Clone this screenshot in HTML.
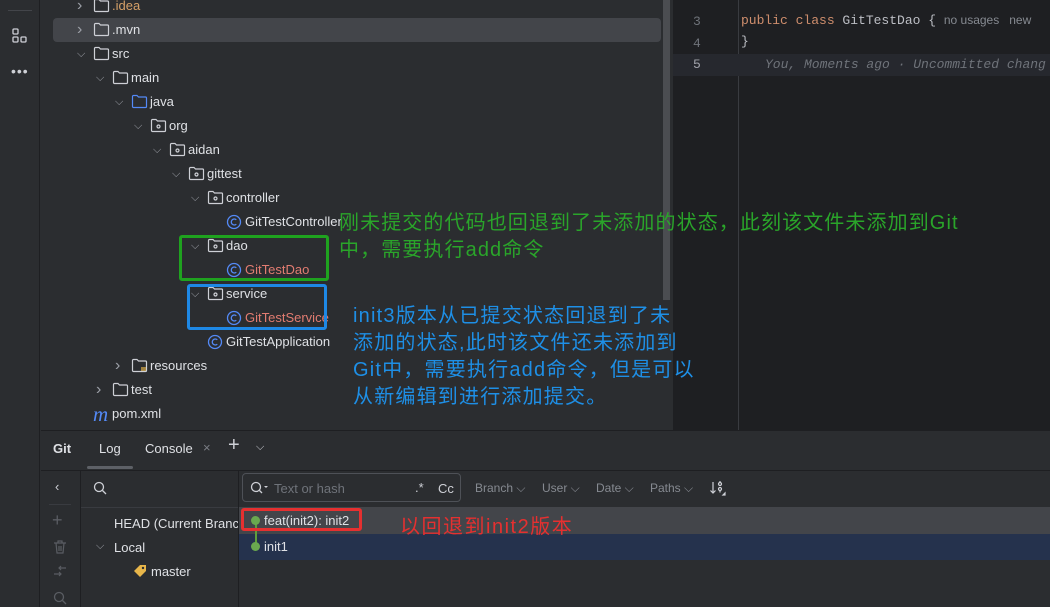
<!DOCTYPE html>
<html><head><meta charset="utf-8"><style>
*{margin:0;padding:0;box-sizing:border-box}
body{width:1050px;height:607px;overflow:hidden;background:#2b2d30;font-family:"Liberation Sans","Noto Sans CJK SC",sans-serif;font-size:13px;color:#dfe1e5;position:relative}
.a{position:absolute}
.row{position:absolute;height:24px;line-height:24px;white-space:nowrap}
.arr{position:absolute;top:0;color:#9da0a8;font-size:11px}
.ic{position:absolute;top:4px;display:block;line-height:0}
.t{position:absolute;top:0}
.cj{font-family:"Liberation Sans","Noto Sans CJK SC",sans-serif}
.mono{font-family:"Liberation Mono",monospace}
.fl{position:absolute;top:481px;color:#868a91;font-size:12px;white-space:nowrap}
</style></head><body>
<div class="a" style="left:0;top:0;width:40px;height:607px;background:#2b2d30;border-right:1px solid #1e1f22"></div>
<div class="a" style="left:8px;top:10px;width:24px;height:1px;background:#43454a"></div>
<svg class="a" style="left:11px;top:27px" width="18" height="18" viewBox="0 0 18 18" fill="none" stroke="#ced0d6" stroke-width="1.3"><rect x="2" y="2" width="5" height="5" rx="1"/><rect x="2" y="10" width="5" height="5" rx="1"/><rect x="10" y="10" width="5" height="5" rx="1"/></svg>
<div class="a" style="left:11px;top:66px;color:#ced0d6;font-size:14px;letter-spacing:1px;line-height:10px">•••</div>
<div class="a" style="left:41px;top:0;width:624px;height:430px;background:#2b2d30"></div>
<div class="a" style="left:53px;top:18px;width:608px;height:24px;background:#43454a;border-radius:4px"></div>
<div class="a" style="left:663px;top:0;width:7px;height:300px;background:#4b4d51"></div>
<div id="tree"></div>
<div class="a" style="left:673px;top:0;width:377px;height:430px;background:#1e1f22"></div>
<div class="a" style="left:738px;top:0;width:1px;height:430px;background:#393b40"></div>
<div class="a" style="left:673px;top:54px;width:377px;height:22px;background:#26282e"></div>
<div class="a mono" style="left:693px;top:13px;color:#6f737a;font-size:13px;line-height:18px">3<br><span style="position:relative;top:4px">4</span></div>
<div class="a mono" style="left:693px;top:57px;color:#a1a3ab;font-size:13px">5</div>
<div class="a mono" style="left:741px;top:13px;font-size:13px;color:#bcbec4"><span style="color:#cf8e6d">public class</span> GitTestDao {  <span style="font-family:'Liberation Sans';font-size:12px;color:#868a91">no usages &nbsp; new</span></div>
<div class="a mono" style="left:741px;top:34px;font-size:13px;color:#bcbec4">}</div>
<div class="a mono" style="left:765px;top:57px;font-size:13px;color:#6f737a;font-style:italic;white-space:nowrap">You, Moments ago · Uncommitted chang</div>
<div class="a" style="left:179px;top:235px;width:150px;height:46px;border:3px solid #1fa21f;border-radius:3px"></div>
<div class="a" style="left:187px;top:284px;width:140px;height:46px;border:3px solid #1e88e5;border-radius:3px"></div>
<div class="a cj" style="left:339px;top:210px;color:#2aa52a;font-size:20px;line-height:27px;white-space:nowrap;letter-spacing:1.1px">刚未提交的代码也回退到了未添加的状态，此刻该文件未添加到Git<br>中，需要执行add命令</div>
<div class="a cj" style="left:353px;top:303px;color:#1e8fe6;font-size:20px;line-height:27px;white-space:nowrap;letter-spacing:1.2px">init3版本从已提交状态回退到了未<br>添加的状态,此时该文件还未添加到<br>Git中，需要执行add命令，但是可以<br>从新编辑到进行添加提交。</div>
<div class="a" style="left:41px;top:430px;width:1009px;height:177px;background:#2b2d30;border-top:1px solid #1e1f22"></div>
<div class="a" style="left:53px;top:441px;font-weight:bold">Git</div>
<div class="a" style="left:99px;top:441px">Log</div>
<div class="a" style="left:87px;top:466px;width:46px;height:3px;background:#5d6066;border-radius:2px"></div>
<div class="a" style="left:145px;top:441px">Console</div>
<div class="a" style="left:203px;top:440px;color:#7b7e85">×</div>
<div class="a" style="left:228px;top:434px;font-size:20px;color:#ced0d6">+</div>
<div class="a" style="left:256px;top:441px;color:#ced0d6;font-size:11px">⌵</div>
<div class="a" style="left:41px;top:470px;width:1009px;height:1px;background:#1e1f22"></div>
<div class="a" style="left:80px;top:471px;width:1px;height:136px;background:#1e1f22"></div>
<div class="a" style="left:238px;top:471px;width:1px;height:136px;background:#1e1f22"></div>
<div class="a" style="left:55px;top:479px;color:#ced0d6">‹</div>
<div class="a" style="left:49px;top:504px;width:22px;height:1px;background:#393b40"></div>
<div class="a" style="left:52px;top:510px;color:#5a5d63;font-size:18px">+</div>
<svg class="a" style="left:52px;top:539px" width="16" height="16" viewBox="0 0 16 16" fill="none" stroke="#5a5d63" stroke-width="1.2"><path d="M2 4h12M6 4V2h4v2M4 4l1 10h6l1-10M7 7v5M9 7v5"/></svg>
<svg class="a" style="left:52px;top:563px" width="16" height="16" viewBox="0 0 16 16" fill="none" stroke="#5a5d63" stroke-width="1.2"><path d="M2 11h7M7 9l2 2-2 2M14 5H7M9 3 7 5l2 2"/></svg>
<svg class="a" style="left:52px;top:590px" width="16" height="16" viewBox="0 0 16 16" fill="none" stroke="#5a5d63" stroke-width="1.3"><circle cx="7" cy="7" r="4.5"/><path d="M10.5 10.5 14 14"/></svg>
<svg class="a" style="left:92px;top:480px" width="16" height="16" viewBox="0 0 16 16" fill="none" stroke="#ced0d6" stroke-width="1.3"><circle cx="7" cy="7" r="4.5"/><path d="M10.5 10.5 14 14"/></svg>
<div class="a" style="left:81px;top:507px;width:157px;height:1px;background:#393b40"></div>
<div class="a" style="left:114px;top:516px;white-space:nowrap;width:124px;overflow:hidden">HEAD (Current Branch)</div>
<div class="a" style="left:96px;top:540px;color:#9da0a8;font-size:11px">⌵</div>
<div class="a" style="left:114px;top:540px">Local</div>
<svg class="a" style="left:133px;top:564px" width="14" height="14" viewBox="0 0 14 14"><path d="M1 7 7 1h6v6l-6 6z" fill="#e8b64a"/><circle cx="10" cy="4" r="1.2" fill="#2b2d30"/></svg>
<div class="a" style="left:151px;top:564px">master</div>
<div class="a" style="left:242px;top:473px;width:219px;height:29px;border:1px solid #4e5157;border-radius:4px"></div>
<svg class="a" style="left:249px;top:480px" width="20" height="16" viewBox="0 0 20 16" fill="none" stroke="#ced0d6" stroke-width="1.3"><circle cx="7" cy="7" r="4.5"/><path d="M10.5 10.5 13 13"/><path d="M15 6h4l-2 2z" fill="#ced0d6" stroke="none"/></svg>
<div class="a" style="left:274px;top:481px;color:#6f737a">Text or hash</div>
<div class="a" style="left:415px;top:480px;color:#ced0d6">.*</div>
<div class="a" style="left:438px;top:481px;color:#ced0d6">Cc</div>
<div class="fl" style="left:475px">Branch ⌵</div>
<div class="fl" style="left:542px">User ⌵</div>
<div class="fl" style="left:596px">Date ⌵</div>
<div class="fl" style="left:650px">Paths ⌵</div>
<svg class="a" style="left:709px;top:480px" width="18" height="18" viewBox="0 0 18 18" fill="none" stroke="#ced0d6" stroke-width="1.2"><path d="M4 2v11M1.5 10.5 4 13l2.5-2.5"/><circle cx="11" cy="4" r="1.5"/><circle cx="11" cy="9" r="1.5"/><path d="M11 1v1.5M11 10.5v2"/><path d="M14 15h2v-2z" fill="#ced0d6"/></svg>
<div class="a" style="left:239px;top:507px;width:811px;height:27px;background:#43454a"></div>
<div class="a" style="left:239px;top:534px;width:811px;height:26px;background:#25324d"></div>
<div class="a" style="left:255px;top:520px;width:2px;height:26px;background:#5f9e3a"></div>
<div class="a" style="left:251px;top:516px;width:9px;height:9px;border-radius:50%;background:#6aa84f"></div>
<div class="a" style="left:251px;top:542px;width:9px;height:9px;border-radius:50%;background:#6aa84f"></div>
<div class="a" style="left:264px;top:513px">feat(init2): init2</div>
<div class="a" style="left:264px;top:539px">init1</div>
<div class="a" style="left:241px;top:508px;width:121px;height:23px;border:3px solid #e53030;border-radius:3px"></div>
<div class="a cj" style="left:400px;top:514px;color:#e53030;font-size:20px;line-height:26px;letter-spacing:1.5px">以回退到init2版本</div>
<script>
const F='<svg width="17" height="15" viewBox="0 0 17 15" fill="none" stroke="#ced0d6" stroke-width="1.2"><path d="M1.5 2.5a1 1 0 0 1 1-1h3.5l1.5 1.5h7a1 1 0 0 1 1 1v8.5a1 1 0 0 1-1 1h-12a1 1 0 0 1-1-1z"/>';
const fold=(c,extra)=>F.replace('#ced0d6',c)+(extra||'')+'</svg>';
const pkg=fold('#ced0d6','<circle cx="8.5" cy="8.5" r="1.5"/>');
const cls='<svg width="16" height="16" viewBox="0 0 16 16" fill="none" stroke="#548af7" stroke-width="1.3"><circle cx="8" cy="8" r="6.5"/><path d="M10.3 5.8a3 3 0 1 0 0 4.4"/></svg>';
const rows=[
[0,'>',fold('#ced0d6'),'.idea','#d5a068'],
[0,'>',fold('#ced0d6'),'.mvn'],
[0,'v',fold('#ced0d6'),'src'],
[1,'v',fold('#ced0d6'),'main'],
[2,'v',fold('#548af7'),'java'],
[3,'v',pkg,'org'],
[4,'v',pkg,'aidan'],
[5,'v',pkg,'gittest'],
[6,'v',pkg,'controller'],
[7,'',cls,'GitTestController'],
[6,'v',pkg,'dao'],
[7,'',cls,'GitTestDao','#e27c71'],
[6,'v',pkg,'service'],
[7,'',cls,'GitTestService','#e27c71'],
[6,'',cls,'GitTestApplication'],
[2,'>',fold('#ced0d6','<path d="M10 10h5M10 12h5" stroke="#e8b64a"/>'),'resources'],
[1,'>',fold('#ced0d6'),'test'],
[0,'','<span style="color:#548af7;font-style:italic;font-size:21px;line-height:16px;font-family:Liberation Serif">m</span>','pom.xml']
];
let h='';
rows.forEach((r,i)=>{const top=-6+24*i,x=80+19*r[0];
const ar=r[1]=='>'?'›':r[1]=='v'?'⌵':'';
h+=`<div class="row" style="top:${top}px;left:0;width:660px">`+
(ar?`<span class="arr" style="left:${x-3}px;${r[1]=='>'?'font-size:16px;':''}">${ar}</span>`:'')+
`<span class="ic" style="left:${x+13}px">${r[2]}</span><span class="t" style="left:${x+32}px;color:${r[4]||'#dfe1e5'}">${r[3]}</span></div>`;});
document.getElementById('tree').innerHTML=h;
</script>
</body></html>
